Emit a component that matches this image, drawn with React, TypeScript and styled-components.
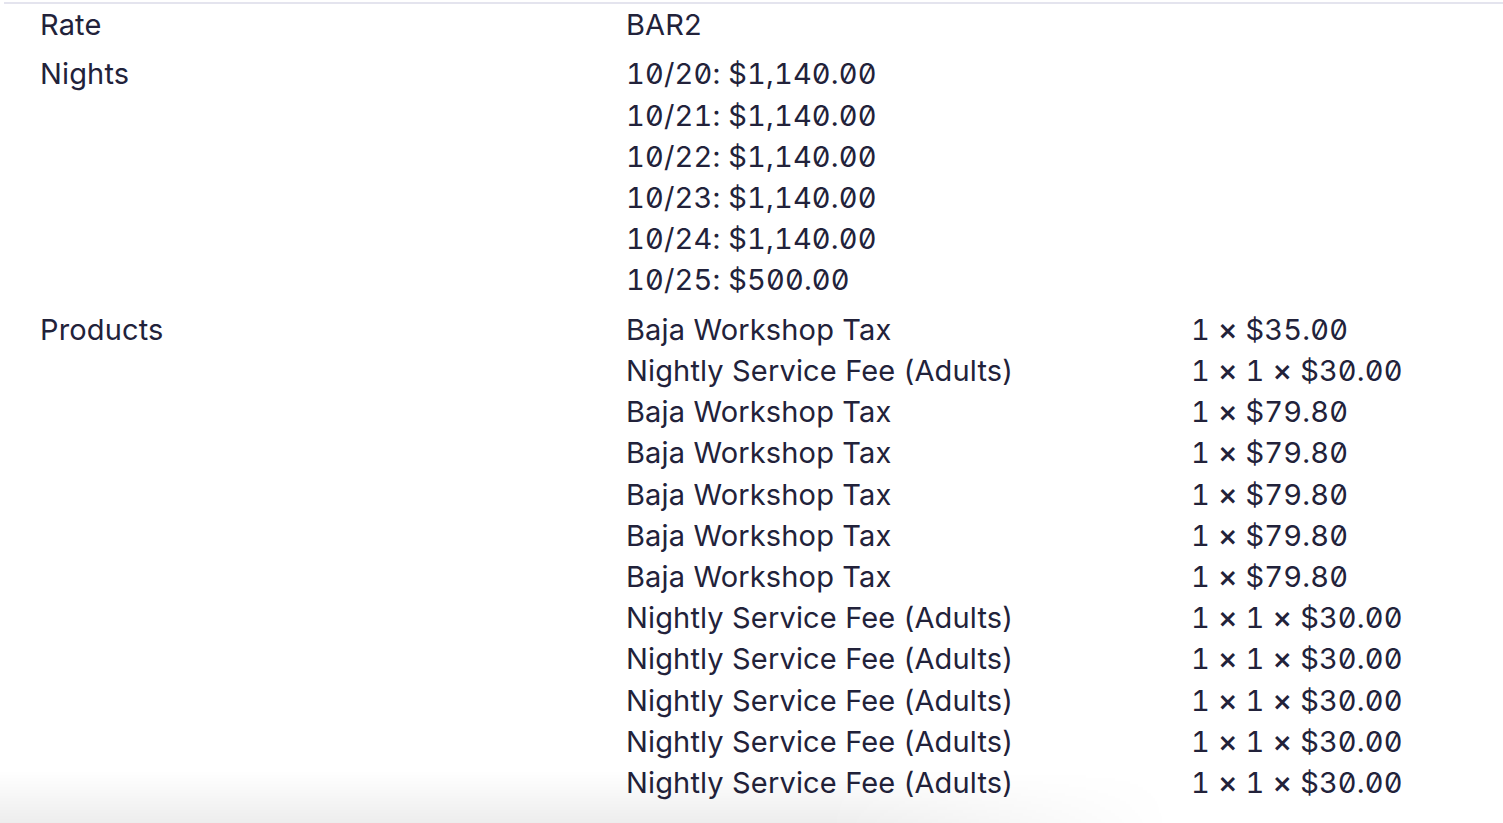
import { Fragment } from 'react';
import { createGlobalStyle, styled } from 'styled-components';

const GlobalStyle = createGlobalStyle`
  html, body {
    margin: 0;
    background: #ffffff;
  }
  body {
    font-family: Inter, 'Noto Sans', sans-serif;
    color: #22223a;
    overflow: hidden;
  }
`;

const nights = [
  { date: '10/20', amount: '$1,140.00' },
  { date: '10/21', amount: '$1,140.00' },
  { date: '10/22', amount: '$1,140.00' },
  { date: '10/23', amount: '$1,140.00' },
  { date: '10/24', amount: '$1,140.00' },
  { date: '10/25', amount: '$500.00' },
];

// quantities, multiplied out with a "×"
const products = [
  { name: 'Baja Workshop Tax', qty: ['1', '$35.00'] },
  { name: 'Nightly Service Fee (Adults)', qty: ['1', '1', '$30.00'] },
  { name: 'Baja Workshop Tax', qty: ['1', '$79.80'] },
  { name: 'Baja Workshop Tax', qty: ['1', '$79.80'] },
  { name: 'Baja Workshop Tax', qty: ['1', '$79.80'] },
  { name: 'Baja Workshop Tax', qty: ['1', '$79.80'] },
  { name: 'Baja Workshop Tax', qty: ['1', '$79.80'] },
  { name: 'Nightly Service Fee (Adults)', qty: ['1', '1', '$30.00'] },
  { name: 'Nightly Service Fee (Adults)', qty: ['1', '1', '$30.00'] },
  { name: 'Nightly Service Fee (Adults)', qty: ['1', '1', '$30.00'] },
  { name: 'Nightly Service Fee (Adults)', qty: ['1', '1', '$30.00'] },
  { name: 'Nightly Service Fee (Adults)', qty: ['1', '1', '$30.00'] },
];

export default function App() {
  return (
    <>
      <GlobalStyle />
      <Details>
        <Label>Rate</Label>
        <Value>BAR2</Value>

        <Label>Nights</Label>
        <Value>
          {nights.map((n) => (
            <Line key={n.date} $mono>
              {n.date}: {n.amount}
            </Line>
          ))}
        </Value>

        <Label>Products</Label>
        <Value>
          {products.map((p, i) => (
            <ProductRow key={i}>
              <Line>{p.name}</Line>
              <Line $mono>
                {p.qty.map((q, j) => (
                  <Fragment key={j}>
                    {j > 0 && (
                      <>
                        {' '}
                        <Times>×</Times>{' '}
                      </>
                    )}
                    {q}
                  </Fragment>
                ))}
              </Line>
            </ProductRow>
          ))}
        </Value>
      </Details>
      <BottomShade />
    </>
  );
}

const Details = styled.dl`
  margin: 2px 0 0 4px;
  padding: 0 0 0 36px;
  border-top: 2px solid #e4e4ee;
  display: grid;
  grid-template-columns: 586px 1fr;
  row-gap: 8.2px;
  font-size: 29px;
  line-height: 41.2px;
  letter-spacing: 0.15px;
`;

const Label = styled.dt`
  margin: 0;
`;

const Value = styled.dd`
  margin: 0;
  display: flex;
  flex-direction: column;
`;

const Line = styled.span<{ $mono?: boolean }>`
  white-space: nowrap;
  font-variant-numeric: ${(p) => (p.$mono ? 'tabular-nums slashed-zero' : 'normal')};
`;

const Times = styled.span`
  font-size: 1.04em;
  font-weight: 500;
  line-height: 0;
`;

const ProductRow = styled.div`
  display: grid;
  grid-template-columns: 565px auto;
`;

const BottomShade = styled.div`
  position: fixed;
  left: 0;
  right: 0;
  bottom: 0;
  height: 52px;
  pointer-events: none;
  background: linear-gradient(to bottom, rgba(0, 0, 0, 0), rgba(0, 0, 0, 0.07));
  -webkit-mask-image: linear-gradient(to right, #000 0%, #000 55%, transparent 78%);
  mask-image: linear-gradient(to right, #000 0%, #000 55%, transparent 78%);
`;
